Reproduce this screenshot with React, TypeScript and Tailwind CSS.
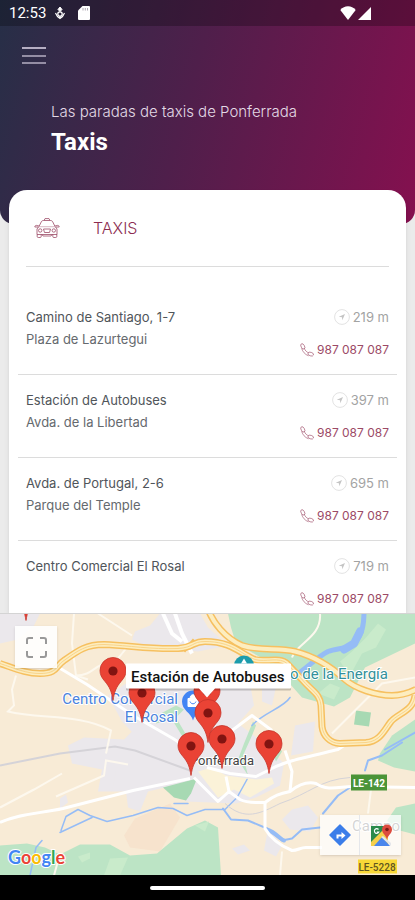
type Stop = {
  name: string;
  place?: string;
  distance: string;
  phone: string;
};

const STOPS: Stop[] = [
  { name: "Camino de Santiago, 1-7", place: "Plaza de Lazurtegui", distance: "219 m", phone: "987 087 087" },
  { name: "Estación de Autobuses", place: "Avda. de la Libertad", distance: "397 m", phone: "987 087 087" },
  { name: "Avda. de Portugal, 2-6", place: "Parque del Temple", distance: "695 m", phone: "987 087 087" },
  { name: "Centro Comercial El Rosal", distance: "719 m", phone: "987 087 087" },
];

// tips of the markers, in map units, back to front
const PINS = [
  { x: 26, y: 7 },
  { x: 113, y: 87 },
  { x: 142, y: 109 },
  { x: 207, y: 107 },
  { x: 208, y: 129 },
  { x: 222, y: 155 },
  { x: 269, y: 160 },
  { x: 191, y: 162 },
];

const MOTORWAYS = [
  "M0 50 C15 55 26 60 40 60 C58 60 56 52 64 47 C78 37 86 31 104 31 C130 32 150 36 178 35 C194 34 192 28 205 28 C232 28 240 40 255 46 C265 49 280 43 287 50 L302 66 C312 78 320 80 321 92 L322 113 C323 122 330 130 340 130 L366 129 C380 128 384 117 391 108 C399 99 413 98 415 82",
  "M209 -2 C213 8 224 24 242 32 C260 38 278 34 295 38 C315 43 333 55 345 66 C355 75 376 82 392 82 C402 82 408 80 416 76",
];

const STREETS = [
  "M0 209 C20 200 40 200 63 195 L133 177 L190 165",
  "M57 53 L87 71 L133 102 L173 125 L187 134",
  "M194 164 L218 188 L229 178 L240 186 C248 190 256 189 265 189 C274 182 280 180 290 178 C300 170 308 168 316 170 C328 178 340 173 352 173 L415 174",
  "M265 189 L265 215 C270 224 280 232 292 237 C298 237 300 234 306 234 L322 234",
  "M229 178 L226 163 M232 117 L252 102 L272 117 M272 155 C285 148 300 145 338 136 L350 128",
  "M285 137 L292 158 L290 178 M207 154 L230 160 L256 163 L272 155",
];

function StatusBar() {
  return (
    <div className="flex h-[26px] items-center justify-between bg-black/25 pl-[9px] pr-11 text-white">
      <div className="flex items-center gap-2">
        <span className="font-[Roboto,sans-serif] text-[15px]">12:53</span>
        <svg viewBox="0 0 12 14" className="h-[14px] w-3" fill="none" stroke="currentColor">
          <path d="M6 1 8 3.500 6 5.500 4 3.500Z" fill="currentColor" />
          <circle cx="6" cy="8" r="2.200" strokeWidth="1.300" />
          <path d="M1.500 7 3.500 10.500 6 12.500 8.500 10.500 10.500 7M6 10v2" strokeWidth="1.200" />
        </svg>
        <svg viewBox="0 0 12 14" className="ml-1 h-[14px] w-3" fill="currentColor">
          <path d="M4.500 0H11a1 1 0 0 1 1 1v12a1 1 0 0 1-1 1H1a1 1 0 0 1-1-1V4.500Z" />
          <path d="M5 2v2.500M7.300 2v2.500M9.500 2v2.500" stroke="#9b92a0" strokeWidth=".8" />
        </svg>
      </div>
      <div className="flex items-center gap-[2px]">
        <svg viewBox="0 0 16 14" className="h-[14px] w-4" fill="currentColor">
          <path d="M8 14 .3 4C2.500 1.500 5 .3 8 .3S13.500 1.500 15.700 4Z" />
        </svg>
        <svg viewBox="0 0 13 13" className="h-[13px] w-[13px]" fill="currentColor">
          <path d="M13 0v13H0Z" />
        </svg>
      </div>
    </div>
  );
}

function MenuIcon() {
  return (
    <svg viewBox="0 0 24 20" className="h-5 w-6" fill="none" stroke="currentColor">
      <path d="M0 2h24" strokeWidth="2" />
      <path d="M0 10h24M0 17h24" strokeWidth="1.500" />
    </svg>
  );
}

function TaxiIcon() {
  return (
    <svg viewBox="0 0 26 20" className="h-5 w-[26px] text-[#9c4a66]" fill="none" stroke="currentColor" strokeWidth=".8">
      <path d="M10 2.500 11 .6h4l1 1.900" />
      <path d="M5 8.500 7.200 4C7.600 3 8.400 2.500 9.500 2.500h7c1.100 0 1.900.5 2.300 1.500L21 8.500" />
      <path d="M4.500 9H.8c0-1 .6-1.600 1.600-1.600L5 8M21.500 9h3.700c0-1-.6-1.600-1.600-1.600L21 8" />
      <path d="M4.500 9 3 11v5.500h20V11l-1.500-2M3.200 16.500v2c0 .6.400 1 1 1h2c.6 0 1-.4 1-1v-2M18.800 16.500v2c0 .6.400 1 1 1h2c.6 0 1-.4 1-1v-2" />
      <circle cx="6.200" cy="12.500" r="1.700" />
      <circle cx="19.800" cy="12.500" r="1.700" />
      <path d="M9.500 11h7l-1 3.500h-5ZM8 16.500l1 1.500h8l1-1.500" />
      <path d="M5 8.700h16" opacity=".5" />
    </svg>
  );
}

function PhoneIcon() {
  return (
    <svg viewBox="0 0 14 14" className="h-[14px] w-[14px]" fill="none" stroke="currentColor" strokeWidth=".6">
      <ellipse cx="2.800" cy="3.400" rx="1.700" ry="2.900" transform="rotate(-28 2.800 3.400)" />
      <ellipse cx="10.700" cy="11.100" rx="2.900" ry="1.800" transform="rotate(18 10.700 11.100)" />
      <path d="M1.600 5.300C2.500 8.500 5 11.600 8.500 12.800M4.400 5.400C5 7.400 6.500 9 8.500 9.800" />
    </svg>
  );
}

function DistanceIcon() {
  return (
    <svg viewBox="0 0 16 16" className="h-4 w-4" fill="none" stroke="#dadada" strokeWidth=".8">
      <circle cx="8" cy="8" r="7.400" />
      <path d="M11 5 4.800 7.800 8 8.200 8.300 11.200Z" fill="#c4c4c4" stroke="none" />
    </svg>
  );
}

function StopRow({ stop }: { stop: Stop }) {
  return (
    <li className="flex justify-between border-b border-[#dcdcdc] px-2 pt-[14px] pb-[13px] text-[13px] leading-[22px] last:border-b-0 last:pb-[3px]">
      <div className="text-[#50555a]">
        <p>{stop.name}</p>
        {stop.place && <p className="text-[#65696e]">{stop.place}</p>}
      </div>
      <div className="flex flex-col items-end gap-[11px]">
        <span className="flex items-center gap-[3px] text-[#a3a3a3]">
          <DistanceIcon />
          {stop.distance}
        </span>
        <a href={`tel:${stop.phone.replace(/ /g, "")}`} className="flex items-center gap-[3px] text-xs leading-[22px] text-[#9c4a66]">
          <PhoneIcon />
          {stop.phone}
        </a>
      </div>
    </li>
  );
}

function Pin({ x, y }: { x: number; y: number }) {
  return (
    <g transform={`translate(${x} ${y})`}>
      <path
        d="M0 0C-1.500-9-3-13-8-19-11.500-23-13-26-13-30A13 13 0 0 1 13-30C13-26 11.500-23 8-19 3-13 1.500-9 0 0Z"
        fill="#ea4335"
        stroke="#c5352b"
        strokeWidth=".8"
      />
      <circle cy="-29.500" r="4.600" fill="#811411" />
    </g>
  );
}

function CityMap() {
  return (
    <svg
      viewBox="0 0 415 262"
      preserveAspectRatio="xMidYMid slice"
      className="absolute inset-0 h-full w-full font-[Roboto,sans-serif]"
      role="img"
      aria-label="Mapa de paradas"
    >
      <rect width="415" height="262" fill="#f8ebd6" />

      {/* built-up areas */}
      <g fill="#ebe8ec">
        <path d="M135 18 150 12 160 0h40l8 14 20 18-30 6-50-4-16-8Z" />
        <path d="M0 0h40l-6 12-16 14-18 4Z" />
        <path d="M150 54h50l50 16 4 22-16 18 26 20 20 20-4 22-24 12-20 6-50-2-30-44-34-36-14-26Z" />
        <path d="M68 132 84 124l40 2 14-14 54 34 6 20-50 12-8 20-12-4-2-16-28 0 4-22-30-6Z" />
        <path d="M102 158l14 0-4 20-8-4ZM292 196l16-4 10 12-8 14-20-2-8-10ZM368 4l18-4 20 20-6 12-20-4Z" />
        <path d="M268 215 282 232 276 243l-12-6ZM232 235l12-4 6 6-12 4ZM60 185l6-4 2 8-8 6Z" />
        <path d="M262 60 278 64l-6 28-10-4ZM295 112l20-4-2 30-22 4Z" />
      </g>
      <path d="M198 158 212 154 226 162 256 166 272 164 274 170 250 184 234 176 218 184Z" fill="#fbf2d8" />
      <path d="M135 205 170 190l10 14-20 34-30-4-6-12Z" fill="#f7e3cd" />

      {/* woods and parks */}
      <g fill="#bce4c5">
        <path d="M228 0H415V30L365 54 350 84 334 93 302 84 286 66 268 48 236 30 231 14Z" />
        <path d="M0 232 27 230 45 234 60 241 80 231H110L130 242 157 240 187 215 205 207 218 214 221 262H0Z" />
        <path d="M415 106 392 122 380 140 378 147 394 154 415 158Z" />
        <path d="M415 190 396 194 387 207 396 216 415 221Z" />
        <path d="M253 108 244 130 238 146 248 162 243 142 252 122 256 112ZM268 114l14 24-6 10-8-18Z" />
        <path d="M155 103 176 92 184 96 176 104 190 128 186 129 172 106 156 110Z" />
      </g>
      <path d="M163 174 197 165 191 180 186 187 174 184Z" fill="#a7d9b3" />
      <path d="M356 97 371 99 369 113 354 111Z" fill="#a7d9b3" />
      <g fill="#c9ebcb">
        <path d="M366 24 378 10 386 16 376 34 362 40 350 62 340 48 352 38ZM330 70 340 74 334 86 318 80Z" />
        <path d="M110 245 128 244 120 262H104ZM78 243l12-4 0 6-8 4ZM195 212l14-4-4 10Z" />
      </g>

      {/* water */}
      <g fill="none" stroke="#95bcf6" strokeLinecap="round" strokeLinejoin="round">
        <path d="M364 -2C364 12 362 20 356 28 350 36 338 34 328 38 316 44 306 56 292 64" strokeWidth="5" />
        <path d="M360 18 354 30 344 36" strokeWidth="8" />
        <path d="M290 84C284 94 262 100 252 112M247 166 237 184 225 196H205L187 202 173 195 158 194 133 202 107 208 90 202 78 196 66 203 61 217M92 204 60 219" strokeWidth="1.500" />
        <path d="M223 195 231 206 248 207 267 215 282 227 292 225 302 216 320 214" strokeWidth="2" />
        <path d="M267 216C276 219 280 226 284 227" strokeWidth="4" />
        <path d="M323 200 338 182 350 174M365 157 368 147 382 142 402 129M385 136 415 119" strokeWidth="2" />
        <path d="M42 227 36 234 30 262M174 190h14" strokeWidth="1.500" />
      </g>

      {/* railway and minor roads */}
      <g fill="none" stroke="#d5d3d8" strokeWidth="2">
        <path d="M0 152 60 140 115 133 135 137 190 157" />
        <path d="M225 190C245 208 260 200 280 190 310 180 320 166 350 164" strokeWidth="1" />
      </g>
      <g fill="none" stroke="#fdf8ee" strokeWidth="2">
        <path d="M74 0 72 30 76 62 88 66M98 0 132 22M76 62C92 62 94 52 106 50 120 48 122 38 128 33" />
        <path d="M16 62 12 76 14 92 8 98C40 106 80 100 111 117L106 140M0 194 34 176 62 160M56 183 104 162 106 147 128 151" />
        <path d="M320 0C322 24 296 30 292 44M332 120 382 70 415 64M60 240 54 262M371 176 368 200M282 238 280 262" />
      </g>

      <g fill="none" stroke="#fff" strokeWidth="3" strokeLinejoin="round">
        {STREETS.map((d) => (
          <path key={d} d={d} />
        ))}
        <path d="M163 0 172 20 182 28M175 0 182 20 192 40" strokeWidth="4" />
      </g>

      <g fill="none" strokeLinejoin="round">
        <path d="M184 38 194 26" stroke="#f5c163" strokeWidth="3" />
        {MOTORWAYS.map((d) => (
          <path key={d} d={d} stroke="#f6c060" strokeWidth="7" />
        ))}
        {MOTORWAYS.map((d) => (
          <path key={d} d={d} stroke="#fdedbf" strokeWidth="4" />
        ))}
        <path d={MOTORWAYS[0]} stroke="#f9d48a" strokeWidth="1" />
      </g>

      {/* places */}
      <g stroke="#fff" strokeWidth="2" paintOrder="stroke">
        <g fill="#4a83dd" fontSize="15" textAnchor="end">
          <text x="178" y="90">Centro Comercial</text>
          <text x="178" y="108">El Rosal</text>
        </g>
        <text x="388" y="65" fill="#33919a" fontSize="15" textAnchor="end">eo de la Energía</text>
        <text x="254" y="151" fill="#444" fontSize="13" textAnchor="end">Ponferrada</text>
        <text x="352" y="217" fill="#555" fontSize="15">Campo</text>
      </g>
      <path d="M193 107C191 99 182 97 182 88A11 11 0 0 1 204 88C204 97 195 99 193 107Z" fill="#4285f4" />
      <path d="M188 85h10v8h-10ZM190 85c0-5 6-5 6 0" fill="#fff" stroke="#fff" />
      <path d="M190 88c1 3 5 3 6 0" fill="none" stroke="#4285f4" />
      <circle cx="244" cy="52" r="10" fill="#1c9cac" />
      <path d="M244 45l3 5h-6Z" fill="#fff" />

      <g fontSize="10" fontWeight="500" textAnchor="middle">
        <rect x="351" y="161" width="36" height="16" fill="#4b9438" />
        <text x="369" y="173" fill="#fff" fontWeight="700">LE-142</text>
        <rect x="358" y="246" width="39" height="14" fill="#f8d837" />
        <text x="377" y="257" fill="#5f5520">LE-5228</text>
      </g>

      {PINS.map((p) => (
        <Pin key={`${p.x}-${p.y}`} x={p.x} y={p.y} />
      ))}

      {/* open marker label */}
      <rect x="126" y="52" width="165" height="25" rx="1" fill="#000" opacity=".2" />
      <path d="M127 50H290a1 1 0 0 1 1 1V74a1 1 0 0 1-1 1H215L207 84 199 75H127a1 1 0 0 1-1-1V51a1 1 0 0 1 1-1Z" fill="#fff" />
      <text x="131" y="68" fontSize="15" fontWeight="500" fill="#111">Estación de Autobuses</text>
    </svg>
  );
}

function MapPanel() {
  return (
    <section className="relative min-h-[262px] flex-1 overflow-hidden border-t border-[#d4d4d4]">
      <CityMap />
      <button
        type="button"
        aria-label="Pantalla completa"
        className="absolute top-3 left-[15px] flex h-[42px] w-[42px] items-center justify-center bg-white/90 shadow-sm"
      >
        <svg viewBox="0 0 21 21" className="h-[21px] w-[21px]" fill="none" stroke="#999" strokeWidth="2">
          <path d="M1 7V3a2 2 0 0 1 2-2h4M14 1h4a2 2 0 0 1 2 2v4M20 14v4a2 2 0 0 1-2 2h-4M7 20H3a2 2 0 0 1-2-2v-4" />
        </svg>
      </button>
      <div className="absolute right-[14px] bottom-5 flex divide-x divide-gray-200 bg-white/75 shadow-sm">
        <a href="#ruta" aria-label="Cómo llegar" className="flex h-10 w-10 items-center justify-center">
          <svg viewBox="0 0 22 22" className="h-[22px] w-[22px]">
            <path d="M11 1 21 11 11 21 1 11Z" fill="#3b7de9" stroke="#3b7de9" strokeWidth="1.500" strokeLinejoin="round" />
            <path d="M7.500 14.500v-4h5V8l4 3.500-4 3.500v-2.500h-3v2Z" fill="#fff" />
          </svg>
        </a>
        <a href="#mapa" aria-label="Abrir en Google Maps" className="flex h-10 w-[41px] items-center justify-center">
          <svg viewBox="0 0 24 24" className="h-6 w-6">
            <path d="M2 3H19V23H2Z" fill="#f5d04b" />
            <path d="M2 3H16L15 6 2 19Z" fill="#2b8a4b" />
            <path d="M5 23 13 14 21 23Z" fill="#4a86ec" />
            <path d="M14 13 22 20v3L12 14Z" fill="#e4e6ea" />
            <path d="M9.500 6.500A2.300 2.300 0 1 0 9.800 9H7.800" fill="none" stroke="#fff" strokeWidth="1.200" />
            <path d="M18 17C17.500 12 13 11 13 6.500a5 5 0 0 1 10 0C23 11 18.500 12 18 17Z" fill="#dd4b3e" />
            <circle cx="18" cy="6.500" r="1.800" fill="#7d1b15" />
          </svg>
        </a>
      </div>
      <div className="absolute bottom-1 left-2 font-[Lato,sans-serif] text-lg leading-7 font-bold [paint-order:stroke] [-webkit-text-stroke:2px_white]">
        <span className="text-[#4285f4]">G</span>
        <span className="text-[#ea4335]">o</span>
        <span className="text-[#fbbc05]">o</span>
        <span className="text-[#4285f4]">g</span>
        <span className="text-[#34a853]">l</span>
        <span className="text-[#ea4335]">e</span>
      </div>
    </section>
  );
}

export default function App() {
  return (
    <div className="flex min-h-screen flex-col bg-[#ebebeb] font-[Inter,sans-serif]">
      <header className="rounded-b-[14px] bg-[linear-gradient(105deg,#262f47_0%,#4f1f4b_45%,#85104f_100%)] pb-[66px]">
        <StatusBar />
        <button type="button" aria-label="Menú" className="mt-5 ml-[22px] block text-[#b5aec2]">
          <MenuIcon />
        </button>
        <div className="mt-[34px] pl-[51px]">
          <p className="text-[15px] leading-6 font-light text-[#e3dae6]">Las paradas de taxis de Ponferrada</p>
          <h1 className="mt-[2px] font-[Roboto,sans-serif] text-2xl leading-8 font-bold text-white">Taxis</h1>
        </div>
      </header>

      <main className="mx-[9px] -mt-[34px] rounded-t-[18px] bg-white px-[9px] shadow-md">
        <div className="mx-2 flex h-[77px] items-center gap-[33px] border-b border-[#dcdcdc] pl-2">
          <TaxiIcon />
          <h2 className="text-base font-light text-[#8c2c50]">TAXIS</h2>
        </div>
        <ul className="mt-[25px]">
          {STOPS.map((stop) => (
            <StopRow key={stop.name} stop={stop} />
          ))}
        </ul>
      </main>

      <MapPanel />

      <div className="flex h-[25px] items-center justify-center bg-black">
        <div className="h-1 w-[115px] rounded-full bg-white" />
      </div>
    </div>
  );
}
